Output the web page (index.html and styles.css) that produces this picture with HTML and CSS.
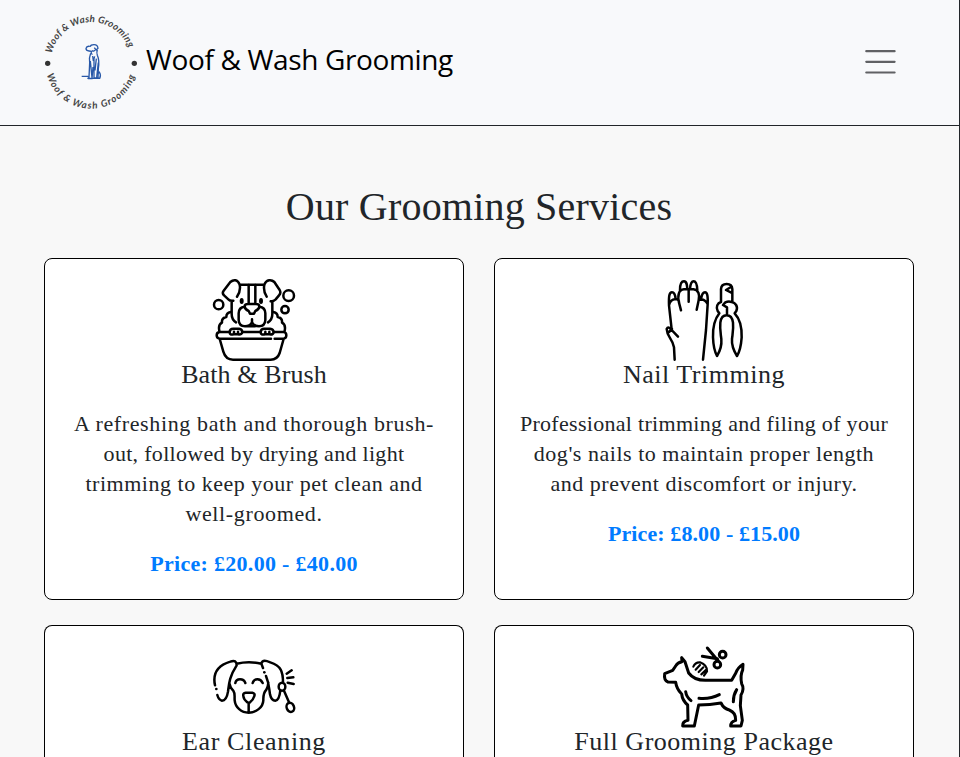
FILE: index.html
```html
<!DOCTYPE html>
<html lang="en">
<head>
<meta charset="utf-8">
<title>Woof &amp; Wash Grooming</title>
<link rel="stylesheet" href="styles.css">
</head>
<body>
<header class="navbar">
  <a class="brand">
    <svg class="logo" viewBox="0 0 330 336">
      <defs>
        <path id="arc-top" d="M47 142.500A121 121 0 0 1 283 142.500"/>
        <path id="arc-bottom" d="M32.500 206A137 137 0 0 0 297.500 206"/>
      </defs>
      <g class="logo-text">
        <text textLength="308"><textPath href="#arc-top" textLength="308">Woof &amp; Wash Grooming</textPath></text>
        <text textLength="356"><textPath href="#arc-bottom" textLength="356">Woof &amp; Wash Grooming</textPath></text>
      </g>
      <circle cx="35" cy="172" r="8" fill="#333"/><circle cx="295" cy="172" r="8" fill="#333"/>
      <g class="logo-dog">
        <path d="M161 121q-9-2-11 6q0 8 9 8l7 1q-2 6 3 10M162 122q2-6 12-6q11 0 12 11l-6 5-5-7M168 134q6 4 8-2M184 131q-3 8 0 17 7 15 3 40l-1 28"/>
        <path d="M164 142q-5 12-3 28l-2 44q-5 3-1 4h10l3-35M170 150l2 15 4-14M174 160v56h14M181 158l-4 35M163 165l5 50M187 170l-5 45M137 211h20M154 217h38M188 199q-7 5-4 18h7q5-10-1-19z"/>
      </g>
    </svg>
    <span class="brand-name">Woof &amp; Wash Grooming</span>
  </a>
  <button class="toggler" aria-label="Menu"><svg viewBox="0 0 30 30"><path d="M4.500 7.300h20.200M4.500 14.900h20.200M4.500 22.500h20.200"/></svg></button>
</header>
<main>
  <h1>Our Grooming Services</h1>
  <div class="services">
    <section class="card">
      <svg class="icon" viewBox="27 27 246 246">
        <path d="M107 44h74M107 44C101 27 88 28 79 36L59 62Q53 70 61 77L73 88Q79 94 88 92M107 44Q111 63 99 80M181 44C187 27 203 28 211 36L227 60Q232 69 225 76L215 88Q208 95 200 94M181 44Q177 63 188 80M83 94V132Q83 149 96 157M205 94V132Q205 149 192 157"/>
        <path d="M134 45V101M154 45V101M122 109Q122 102 132 102H156Q166 102 166 109 165 119 154 123L150 131H138L134 123Q123 119 122 109ZM122 110Q104 112 104 130V150Q105 169 123 169 138 169 144 157M166 110Q184 112 184 130V150Q183 169 165 169 150 169 144 157M144 148V157M135 169H153"/>
        <path d="M80 126Q67 128 67 141 52 144 54 158 42 164 46 182M208 126Q221 128 221 141 236 144 234 158 246 164 242 182M77 186H47Q38 187 38 196T47 206H201M212 206H239Q247 205 247 196T239 186H211M115 186H170M48 210L58 245Q65 269 87 269H200Q220 269 227 249L238 210"/>
        <path d="M77 187Q77 176 88 176H105Q115 177 115 187 112 195 101 193H89Q77 196 77 187ZM90 185V190M102 185V190M170 187Q170 176 181 176H198Q209 177 209 187 207 195 196 193H183Q170 196 170 187ZM184 185V190M196 185V190"/>
        <ellipse class="solid" cx="113" cy="93" rx="6" ry="9"/><ellipse class="solid" cx="171" cy="93" rx="6" ry="9"/>
        <circle cx="44" cy="104" r="14"/><circle cx="254" cy="77" r="16"/><circle cx="243" cy="119" r="11"/>
      </svg>
      <h2 class="s0">Bath &amp; Brush</h2>
      <p><span class="s4">A refreshing bath and thorough brush-</span><br><span class="s1">out, followed by drying and light</span><br><span class="s3">trimming to keep your pet clean and</span><br><span class="s4">well-groomed.</span></p>
      <p class="price s1">Price: £20.00 - £40.00</p>
    </section>
    <section class="card">
      <svg class="icon" viewBox="27 27 246 246">
        <path d="M45 106C44 78 46 67 54 67S64 77 65 88M45 106C47 93 54 88 65 87Q76 88 75 98L81 121M45 106L53 178M78 60C78 43 82 34 90 34S99 43 100 57M108 57C109 43 112 34 119 34S129 43 130 60M75 98C70 76 74 59 90 58H118C134 59 138 76 134 91L128 119M104 60V95M141 89C143 74 146 67 153 67S162 78 161 103M134 90Q152 84 161 103L156 180 147 269M62 269L60 232Q57 217 47 202 39 190 38 177 42 168 50 177L72 200M45 186L54 177"/>
        <path d="M201 96V57Q202 42 218 42T235 57V96M231 51L216 60 232 68M201 96C190 99 185 111 191 123L196 130C184 145 176 170 177 202 178 232 183 247 189 258 197 245 204 230 202 207 200 190 197 178 199 158 201 142 208 136 218 136S235 143 237 158C239 178 236 190 234 207 232 230 241 245 249 258 257 245 261 230 263 202 264 170 256 145 242 130L247 123C253 109 244 98 233 96Q224 92 214 97L207 105 219 112V134"/>
      </svg>
      <h2 class="s3">Nail Trimming</h2>
      <p><span class="s1">Professional trimming and filing of your</span><br><span class="s3">dog's nails to maintain proper length</span><br><span class="s3">and prevent discomfort or injury.</span></p>
      <p class="price s0">Price: £8.00 - £15.00</p>
    </section>
    <section class="card">
      <svg class="icon" viewBox="27 18 246 246">
        <path d="M98 71Q135 62 172 71M33 136C26 103 36 78 79 65Q98 58 98 76C76 110 75 130 72 155 69 174 64 182 54 182Q44 180 40 165M76 130Q79 145 88 152C94 160 91 170 92 181 94 202 112 218 134 218S177 202 178 181C178 168 177 160 187 149Q192 142 193 128M172 71C175 58 187 62 199 67 231 77 237 95 237 127M172 71L177 84M186 108C196 132 195 145 198 163 201 178 207 182 214 182 224 181 227 170 229 151M94 129Q96 118 108 118T124 129M146 129Q149 118 160 118T176 129M118 168Q116 159 125 158H145Q154 160 151 168 148 179 138 187 133 190 129 186 119 178 118 168ZM134 189V217M248 101L263 91M250 114L268 112M251 128L269 132"/>
        <circle class="solid" cx="37" cy="147" r="4"/><circle class="solid" cx="181" cy="97" r="4"/>
        <ellipse cx="234" cy="140" rx="10" ry="12"/><path d="M240 152L255 187"/><ellipse cx="259" cy="202" rx="11" ry="14" transform="rotate(-22 259 202)"/>
      </svg>
      <h2 class="s4">Ear Cleaning</h2>
    </section>
    <section class="card">
      <svg class="icon thick" viewBox="27 30 246 246">
        <path d="M83 65L84 77Q70 79 65 90L56 103 32 113Q29 133 42 138L65 139Q68 160 83 174 85 193 101 207L102 253Q85 256 86 270H121L134 207Q168 207 201 201 209 218 226 222 246 230 245 253 230 257 230 270H261L265 253 259 209 261 177Q272 158 263 143 258 118 266 102L267 85Q251 95 245 112L233 133H157Q121 134 104 111L93 77Z"/>
        <path d="M95 167Q97 183 111 194M135 187Q169 190 196 176M248 161Q238 177 238 197"/>
        <path class="comb" d="M118 92Q124 78 138 79 160 87 159 106L150 119M125 101L138 87M134 108L148 94M142 115L157 101"/>
        <path d="M160 36L190 72M145 61L190 68 192 74"/><circle cx="206" cy="56" r="10"/><circle cx="190" cy="86" r="10"/>
      </svg>
      <h2 class="s3">Full Grooming Package</h2>
    </section>
  </div>
</main>
</body>
</html>
```
FILE: styles.css
```css
* { box-sizing: border-box; }
html { background: #f8f8f8; overflow: hidden; }
body { margin: 0; height: 757px; overflow: hidden; border-right: 1px solid #212529; color: #212529; font-family: "Liberation Serif", serif; }
.navbar { height: 126px; padding: 0 57px 2px 36px; display: flex; align-items: center; justify-content: space-between; background: #f8f9fb; border-bottom: 1px solid #212529; }
.brand { display: flex; align-items: center; color: #000; }
.logo { width: 110px; height: 112px; }
.logo-text { font: italic bold 29px Lato, sans-serif; fill: #444; }
.logo-dog { fill: none; stroke: #2858a8; stroke-width: 4; }
.brand-name { font: 28px/42px "Open Sans", sans-serif; letter-spacing: -.35px; padding-bottom: 6px; white-space: nowrap; }
.toggler { padding: 0; border: 0; background: none; width: 42px; height: 42px; }
.toggler svg { display: block; width: 42px; height: 42px; fill: none; stroke: #606164; stroke-width: 1.6; stroke-linecap: round; }
main { padding: 57px 45px 0 44px; }
h1 { margin: 0 0 27px; font-size: 40px; line-height: 48px; font-weight: 400; text-align: center; letter-spacing: .2px; }
.services { display: grid; grid-template-columns: 420px 420px; grid-template-rows: 342px 132px; gap: 25px 30px; }
.card { padding: 20px 0 0; background: #fff; border: 1px solid #000; border-radius: 8px; text-align: center; }
.card:nth-child(n+3) { border-bottom: 0; border-radius: 8px 8px 0 0; }
.icon { display: block; width: 82px; height: 82px; margin: 0 auto -1px; fill: none; stroke: #000; stroke-width: 7.5; stroke-linecap: round; stroke-linejoin: round; overflow: visible; }
.icon .solid { fill: #000; stroke: none; }
.icon.thick { stroke-width: 9; }
.icon .comb { stroke-width: 6.5; }
h2 { margin: 0 0 20px; font-size: 26px; line-height: 29px; font-weight: 400; }
p { margin: 0 0 20px; font-size: 22px; line-height: 30px; white-space: nowrap; }
.price { color: #007bff; font-weight: 700; font-size: 22px; }
.s0 { letter-spacing: .1px; }
.s1 { letter-spacing: .3px; }
.s3 { letter-spacing: .52px; }
.s4 { letter-spacing: .63px; }
```
